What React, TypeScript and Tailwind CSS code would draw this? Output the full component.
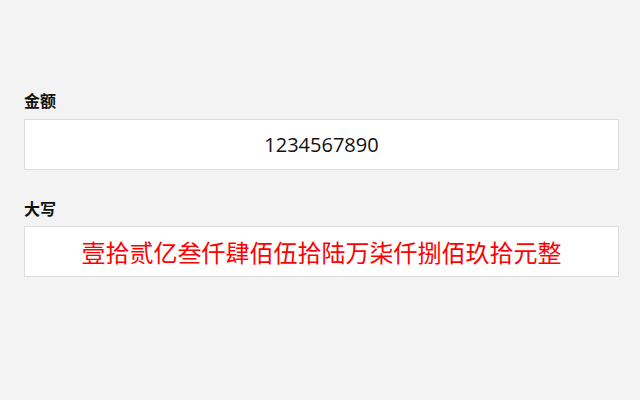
import { useState } from 'react';

const digits = ['零', '壹', '贰', '叁', '肆', '伍', '陆', '柒', '捌', '玖'];

// 简单的大写转换（只处理整数部分）
function toUpper(num: string) {
  const n = num.replace(/\D/g, '');
  if (!n) return '';
  const units = ['', '拾', '佰', '仟'];
  const big = ['', '万', '亿'];
  let out = '';
  const groups: string[] = [];
  for (let i = n.length; i > 0; i -= 4) groups.unshift(n.slice(Math.max(0, i - 4), i));
  groups.forEach((g, gi) => {
    let s = '';
    let zero = false;
    for (let i = 0; i < g.length; i++) {
      const d = Number(g[i]);
      const u = units[g.length - 1 - i];
      if (d === 0) zero = true;
      else {
        if (zero && s) s += '零';
        zero = false;
        s += digits[d] + u;
      }
    }
    if (s) out += s + big[groups.length - 1 - gi];
  });
  return out + '元整';
}

export default function App() {
  const [amount, setAmount] = useState('1234567890');

  return (
    <div className="min-h-[400px] bg-[#f3f3f3] pl-6 pr-[21px] pt-[90px] font-['Open_Sans','Noto_Sans_CJK_SC',sans-serif]">
      <div className="text-[16px] leading-5 font-bold text-[#111] font-['Noto_Sans_CJK_SC',sans-serif]">金额</div>
      <input
        type="text"
        value={amount}
        onChange={(e) => setAmount(e.target.value)}
        className="mt-[9px] block w-full h-[51px] bg-white border border-[#dedede] text-center text-[20px] text-[#111] outline-none font-['Open_Sans',sans-serif]"
      />
      <div className="mt-[28px] text-[16px] leading-5 font-bold text-[#111] font-['Noto_Sans_CJK_SC',sans-serif]">大写</div>
      <div className="mt-[8px] h-[51px] bg-white border border-[#dedede] flex items-center justify-center text-[24px] text-[#ff0000] font-['Noto_Sans_CJK_SC',sans-serif]">
        {toUpper(amount)}
      </div>
    </div>
  );
}
